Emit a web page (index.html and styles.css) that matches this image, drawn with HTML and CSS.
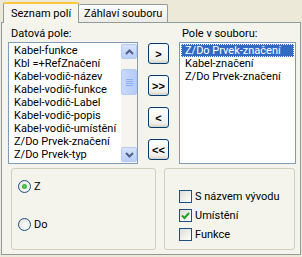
FILE: index.html
```html
<!DOCTYPE html>
<html lang="cs">
<head>
    <meta charset="UTF-8">
    <title>Seznam polí</title>
    <link rel="stylesheet" href="styles.css">
</head>
<body>
    <div class="tabs">
        <div class="tab active">Seznam polí</div>
        <div class="tab">Záhlaví souboru</div>
    </div>
    <div class="panel">
        <div class="top">
            <div class="col left-col">
                <div class="label">Datová pole:</div>
                <div class="list">
                    <div class="items">
                        <div class="item">Kabel-funkce</div>
                        <div class="item">Kbl =+RefZnačení</div>
                        <div class="item">Kabel-vodič-název</div>
                        <div class="item">Kabel-vodič-funkce</div>
                        <div class="item">Kabel-vodič-Label</div>
                        <div class="item">Kabel-vodič-popis</div>
                        <div class="item">Kabel-vodič-umístění</div>
                        <div class="item">Z/Do Prvek-značení</div>
                        <div class="item">Z/Do Prvek-typ</div>
                    </div>
                    <div class="scrollbar">
                        <div class="sb-btn">
                            <svg width="9" height="6" viewBox="0 0 9 6"><path d="M1 5 L4.5 1.5 L8 5" fill="none" stroke="#4d6185" stroke-width="2"/></svg>
                        </div>
                        <div class="sb-track">
                            <div class="sb-thumb">
                                <span></span><span></span><span></span><span></span>
                            </div>
                        </div>
                        <div class="sb-btn">
                            <svg width="9" height="6" viewBox="0 0 9 6"><path d="M1 1 L4.5 4.5 L8 1" fill="none" stroke="#4d6185" stroke-width="2"/></svg>
                        </div>
                    </div>
                </div>
            </div>
            <div class="buttons">
                <button class="btn">&gt;</button>
                <button class="btn">&gt;&gt;</button>
                <button class="btn">&lt;</button>
                <button class="btn">&lt;&lt;</button>
            </div>
            <div class="col right-col">
                <div class="label">Pole v souboru:</div>
                <div class="list">
                    <div class="items">
                        <div class="item selected">Z/Do Prvek-značení</div>
                        <div class="item">Kabel-značení</div>
                        <div class="item">Z/Do Prvek-značení</div>
                    </div>
                </div>
            </div>
        </div>
        <div class="bottom">
            <div class="group radios">
                <div class="option"><span class="radio checked"></span>Z</div>
                <div class="option"><span class="radio"></span>Do</div>
            </div>
            <div class="group checks">
                <div class="option"><span class="check"></span>S názvem vývodu</div>
                <div class="option"><span class="check">
                    <svg width="9" height="9" viewBox="0 0 9 9"><path d="M1 4.5 L3.5 7 L8 2" fill="none" stroke="#21a121" stroke-width="2"/></svg>
                </span>Umístění</div>
                <div class="option"><span class="check"></span>Funkce</div>
            </div>
        </div>
    </div>
</body>
</html>
```

FILE: styles.css
```css
body {
    margin: 0;
    width: 302px;
    height: 257px;
    background-color: #ece9d8;
    font-family: Roboto, "Liberation Sans", sans-serif;
    font-size: 11px;
    color: #000;
    overflow: hidden;
}

.tabs {
    display: flex;
    align-items: flex-end;
    height: 22px;
    padding-left: 3px;
}

.tab {
    height: 17px;
    line-height: 17px;
    padding: 0 5px;
    border: 1px solid #919b9c;
    border-bottom: none;
    border-radius: 2px 2px 0 0;
    background: linear-gradient(#fefefe, #ecebe5);
}

.tab.active {
    position: relative;
    height: 19px;
    line-height: 19px;
    margin-bottom: -1px;
    padding: 0 7px;
    border-top: 2px solid #ffc83c;
    background: #f6f5ee;
    z-index: 1;
}

.tab + .tab {
    border-left: none;
}

.panel {
    height: 233px;
    margin: 0 1px;
    border: 1px solid #919b9c;
    background-color: #f4f3ec;
    padding: 4px 0 0 6px;
    box-sizing: border-box;
}

.top {
    display: flex;
    height: 137px;
}

.label {
    height: 13px;
    line-height: 13px;
    margin-bottom: 2px;
    padding-left: 3px;
}

.left-col {
    width: 130px;
}

.right-col {
    width: 117px;
}

.list {
    display: flex;
    height: 122px;
    border: 1px solid #7f9db9;
    background-color: #fff;
    box-sizing: border-box;
}

.items {
    flex: 1;
    padding: 1px;
}

.item {
    height: 13px;
    line-height: 13px;
    padding-left: 4px;
    white-space: nowrap;
    overflow: hidden;
}

.item.selected {
    background-color: #316ac5;
    color: #fff;
    outline: 1px dotted #f0f0f0;
    outline-offset: -1px;
}

.scrollbar {
    display: flex;
    flex-direction: column;
    width: 16px;
    background-color: #f5f4ef;
}

.sb-btn {
    display: flex;
    align-items: center;
    justify-content: center;
    height: 15px;
    margin: 1px 0;
    border: 1px solid #b6c9f1;
    border-radius: 2px;
    background: linear-gradient(#d7e3fd, #b9cefa);
    box-sizing: border-box;
}

.sb-track {
    flex: 1;
    padding-top: 9px;
}

.sb-thumb {
    display: flex;
    flex-direction: column;
    align-items: center;
    justify-content: center;
    gap: 1px;
    height: 26px;
    border: 1px solid #b6c9f1;
    border-radius: 2px;
    background: linear-gradient(90deg, #c9d8fc, #b6cbf9);
    box-sizing: border-box;
}

.sb-thumb span {
    width: 7px;
    height: 1px;
    background-color: #8eaef2;
}

.buttons {
    display: flex;
    flex-direction: column;
    gap: 11px;
    padding: 16px 10px 0 10px;
}

.btn {
    width: 21px;
    height: 21px;
    padding: 0;
    border: 1px solid #003c74;
    border-radius: 3px;
    background: linear-gradient(#fefefe, #f0f0ea 80%, #d6d0c5);
    font-family: "Liberation Sans", Arial, sans-serif;
    font-size: 11px;
    font-weight: bold;
    color: #000;
}

.bottom {
    display: flex;
    gap: 8px;
    padding: 4px 0 0 3px;
}

.group {
    height: 82px;
    border: 1px solid #d0d0bf;
    border-radius: 3px;
    box-sizing: border-box;
}

.radios {
    width: 145px;
    display: flex;
    flex-direction: column;
    gap: 25px;
    padding: 11px 0 0 6px;
}

.checks {
    width: 131px;
    display: flex;
    flex-direction: column;
    gap: 6px;
    padding: 21px 0 0 14px;
}

.option {
    display: flex;
    align-items: center;
    height: 13px;
    gap: 3px;
}

.radio {
    width: 11px;
    height: 11px;
    border: 1px solid #1c5180;
    border-radius: 50%;
    background: radial-gradient(circle at 60% 60%, #fff, #dcdcd5);
    display: flex;
    align-items: center;
    justify-content: center;
}

.radio.checked::after {
    content: "";
    width: 5px;
    height: 5px;
    border-radius: 50%;
    background: radial-gradient(#5ed35e, #21a121);
}

.check {
    width: 11px;
    height: 11px;
    border: 1px solid #1c5180;
    background: linear-gradient(135deg, #dcdcd7, #fff);
    display: flex;
    align-items: center;
    justify-content: center;
}
```
